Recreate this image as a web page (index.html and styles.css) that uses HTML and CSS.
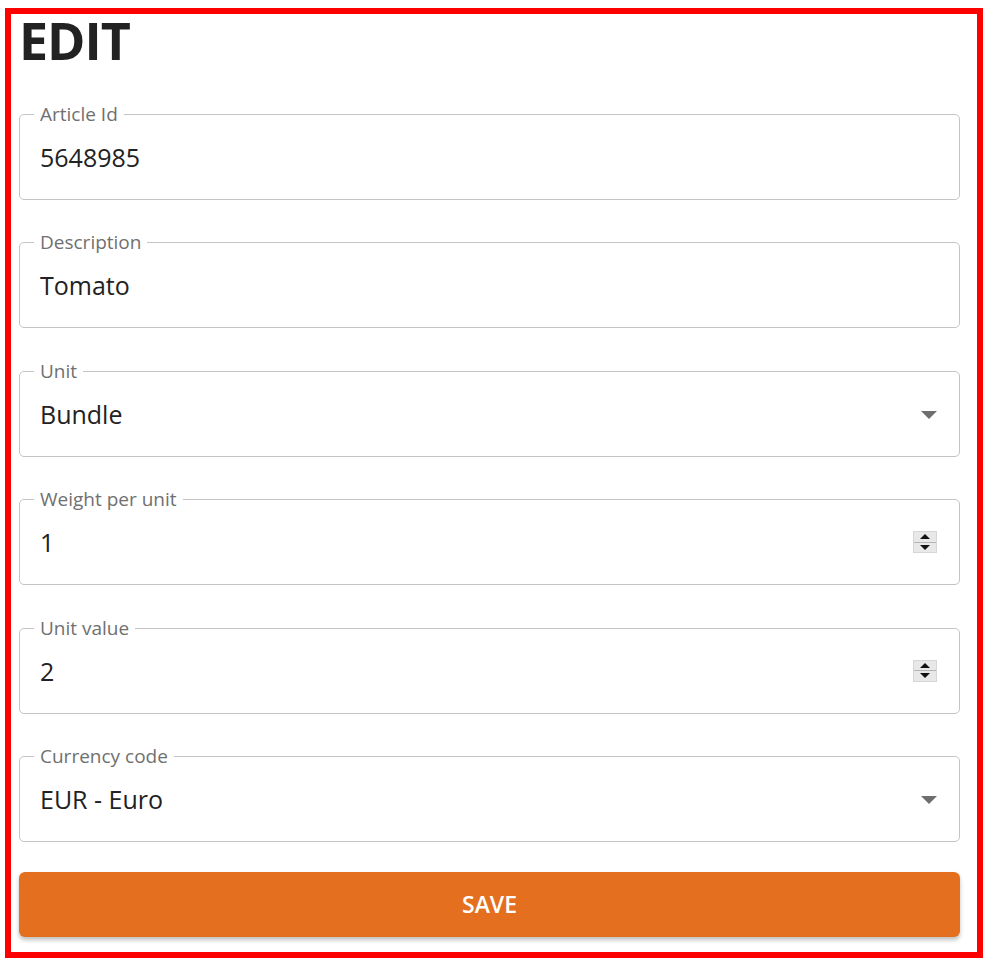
FILE: index.html
```html
<!DOCTYPE html>
<html lang="en">
  <head>
    <meta charset="UTF-8" />
    <meta name="viewport" content="width=device-width, initial-scale=1.0" />
    <title>Edit article</title>
    <link rel="stylesheet" href="styles.css">
  </head>
  <body>
    <div class="frame">
      <h1>EDIT</h1>
      <form id="editForm">
        <div class="field">
          <label for="articleId">Article Id</label>
          <input type="text" id="articleId" name="articleId" value="5648985" />
        </div>

        <div class="field">
          <label for="description">Description</label>
          <input type="text" id="description" name="description" value="Tomato" />
        </div>

        <div class="field">
          <label for="unit">Unit</label>
          <select id="unit" name="unit">
            <option value="Bundle">Bundle</option>
            <option value="Kg">Kg</option>
            <option value="Piece">Piece</option>
          </select>
          <span class="arrow"></span>
        </div>

        <div class="field">
          <label for="weight">Weight per unit</label>
          <input type="text" id="weight" name="weight" value="1" />
          <span class="spinner"><i class="up"></i><i class="down"></i></span>
        </div>

        <div class="field">
          <label for="unitValue">Unit value</label>
          <input type="text" id="unitValue" name="unitValue" value="2" />
          <span class="spinner"><i class="up"></i><i class="down"></i></span>
        </div>

        <div class="field">
          <label for="currency">Currency code</label>
          <select id="currency" name="currency">
            <option value="EUR">EUR - Euro</option>
            <option value="USD">USD - US Dollar</option>
          </select>
          <span class="arrow"></span>
        </div>

        <button type="submit" id="saveBtn">SAVE</button>
      </form>
    </div>
  </body>
</html>
```

FILE: styles.css
```css
body {
  font-family: "Open Sans", Arial, sans-serif;
  background-color: #fff;
  margin: 0;
  padding: 8px 11px 0 5px;
}
.frame {
  border: 6px solid #ff0000;
  height: 950px;
  box-sizing: border-box;
  padding: 0 17px 0 8px;
}
h1 {
  margin: 0 0 48px 0;
  font-size: 52px;
  line-height: 52px;
  font-weight: 700;
  color: #222;
  letter-spacing: -1px;
}
form {
  display: flex;
  flex-direction: column;
  gap: 42.4px;
}
.field {
  position: relative;
  height: 86px;
  border: 1px solid #c4c4c4;
  border-radius: 5px;
  box-sizing: border-box;
}
.field label {
  position: absolute;
  top: -11px;
  left: 14px;
  padding: 0 6px;
  background-color: #fff;
  font-size: 19px;
  line-height: 20px;
  color: #707070;
}
input,
select {
  width: 100%;
  height: 100%;
  padding: 0 60px 0 20px;
  border: none;
  background: transparent;
  font-family: inherit;
  font-size: 25px;
  color: #222;
  box-sizing: border-box;
  outline: none;
  appearance: none;
  -webkit-appearance: none;
}
.arrow {
  position: absolute;
  right: 22px;
  top: 39px;
  width: 0;
  height: 0;
  border-left: 8px solid transparent;
  border-right: 8px solid transparent;
  border-top: 8px solid #6e6e6e;
  pointer-events: none;
}
.spinner {
  position: absolute;
  right: 22px;
  top: 31px;
  width: 24px;
  height: 22px;
  background-color: #e8e8e8;
  border: 1px solid #d6d6d6;
  box-sizing: border-box;
  display: flex;
  flex-direction: column;
}
.spinner i {
  flex: 1;
  display: flex;
  align-items: center;
  justify-content: center;
}
.spinner .up {
  border-bottom: 1px solid #b5b5b5;
}
.spinner .up::before,
.spinner .down::before {
  content: "";
  border-left: 5px solid transparent;
  border-right: 5px solid transparent;
}
.spinner .up::before {
  border-bottom: 5px solid #111;
}
.spinner .down::before {
  border-top: 5px solid #111;
}
button {
  margin-top: -12.4px;
  height: 65px;
  background-color: #e46f1f;
  color: #fff;
  border: none;
  border-radius: 6px;
  font-family: inherit;
  font-size: 23px;
  font-weight: 600;
  cursor: pointer;
  box-shadow: 0 3px 4px rgba(0, 0, 0, 0.25);
}
button:hover {
  background-color: #d4631a;
}
```
